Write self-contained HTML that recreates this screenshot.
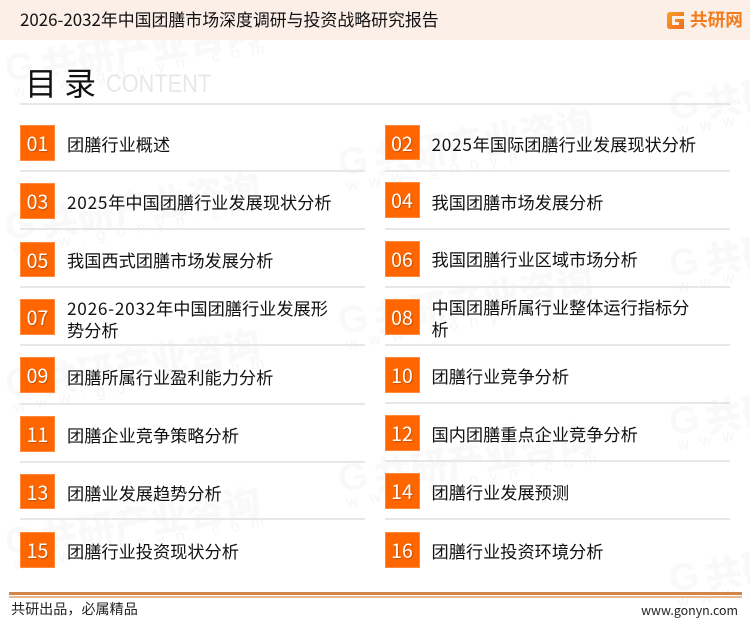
<!DOCTYPE html>
<html lang="zh">
<head>
<meta charset="utf-8">
<title>目录</title>
<style>
html,body{margin:0;padding:0;background:#fff;width:750px;height:622px;overflow:hidden}
#p{position:relative;width:750px;height:622px;overflow:hidden;font-family:"Noto Sans CJK SC","Liberation Sans",sans-serif;color:#222;background:#fff}
.hd{position:absolute;left:0;top:0;width:750px;height:40px;background:#fcefe8}
.ttl{position:absolute;left:20px;top:7px;font-size:16.9px;line-height:24px;color:#111;white-space:nowrap}
.lg{position:absolute;left:690px;top:9px;font-size:17.6px;line-height:22px;font-weight:700;color:#f27b1c;white-space:nowrap}
.wm{position:absolute;width:300px;height:54px;transform:rotate(-10deg);transform-origin:0 0;white-space:nowrap;color:#f9f9f9}
.wm b{position:absolute;left:38px;top:0;font-size:37px;line-height:40px;font-weight:900}
.wm i{position:absolute;left:2px;top:0;font:900 38px/40px "Liberation Sans",sans-serif}
.wm span{position:absolute;left:6px;top:34px;font:16px/20px "Liberation Sans",sans-serif;letter-spacing:11.5px;color:#f6f6f6}
.h1{position:absolute;left:25px;top:60px;font-size:32px;line-height:44px;color:#111;white-space:nowrap}
.en{position:absolute;left:106px;top:69px;font:25px/30px "Liberation Sans",sans-serif;color:#e8e8e8;transform:scaleX(.87);transform-origin:0 0}
.ln{position:absolute;height:2px;background:#e7e7e7}
.n{position:absolute;width:35px;height:36px;background:#ff6600;color:#fff;text-align:center;font-size:19.5px;line-height:35px;box-shadow:inset 0 0 0 1px #ff8a3c;text-shadow:1px 1px 1px rgba(120,50,0,.45)}
.t{position:absolute;font-size:17.2px;line-height:21.5px;color:#111;white-space:nowrap}
.t u{text-decoration:none;letter-spacing:.75px}
.f1{position:absolute;left:11px;top:599px;font-size:14.1px;line-height:20px;color:#222;white-space:nowrap}
.f2{position:absolute;right:12px;top:600px;font:12.4px/20px "Noto Sans CJK SC","Liberation Sans",sans-serif;color:#222;white-space:nowrap}
</style>
</head>
<body>
<div id="p">
<div class="wm" style="left:0;top:51px"><i>G</i><b>共研产业咨询</b><span>www.gonyn.com</span></div>
<div class="wm" style="left:0;top:209px"><i>G</i><b>共研产业咨询</b><span>www.gonyn.com</span></div>
<div class="wm" style="left:0;top:366px"><i>G</i><b>共研产业咨询</b><span>www.gonyn.com</span></div>
<div class="wm" style="left:0;top:524px"><i>G</i><b>共研产业咨询</b><span>www.gonyn.com</span></div>
<div class="wm" style="left:333px;top:145px"><i>G</i><b>共研产业咨询</b><span>www.gonyn.com</span></div>
<div class="wm" style="left:333px;top:303px"><i>G</i><b>共研产业咨询</b><span>www.gonyn.com</span></div>
<div class="wm" style="left:333px;top:461px"><i>G</i><b>共研产业咨询</b><span>www.gonyn.com</span></div>
<div class="wm" style="left:664px;top:89px"><i>G</i><b>共研产业咨询</b><span>www.gonyn.com</span></div>
<div class="wm" style="left:664px;top:246px"><i>G</i><b>共研产业咨询</b><span>www.gonyn.com</span></div>
<div class="wm" style="left:664px;top:404px"><i>G</i><b>共研产业咨询</b><span>www.gonyn.com</span></div>
<div class="wm" style="left:664px;top:561px"><i>G</i><b>共研产业咨询</b><span>www.gonyn.com</span></div>

<div class="hd"></div>
<div class="ttl">2026-2032年中国团膳市场深度调研与投资战略研究报告</div>
<svg style="position:absolute;left:667px;top:12px" width="18" height="17" viewBox="0 0 18 17"><defs><linearGradient id="g" x1="0" y1="0" x2="1" y2="1"><stop offset="0" stop-color="#f9a02a"/><stop offset="1" stop-color="#ef6a1a"/></linearGradient></defs><path d="M3 0H17V4H5V13H12V10H8V7H17V17H3Q0 17 0 14V3Q0 0 3 0Z" fill="url(#g)"/></svg>
<div class="lg">共研网</div>

<div class="h1">目 录</div>
<div class="en">CONTENT</div>
<div class="ln" style="left:20px;top:103px;height:1.5px;width:710px"></div>

<div class="n" style="left:20px;top:125px">01</div><div class="t" style="left:67px;top:133px">团膳行业概述</div>
<div class="n" style="left:384.5px;top:125px;height:35px">02</div><div class="t" style="left:431.5px;top:133px"><u>2025</u>年国际团膳行业发展现状分析</div>
<div class="ln" style="left:20px;top:170px;width:345px"></div><div class="ln" style="left:384.5px;top:169.5px;width:345.5px"></div>

<div class="n" style="left:20px;top:183px">03</div><div class="t" style="left:67px;top:191px"><u>2025</u>年中国团膳行业发展现状分析</div>
<div class="n" style="left:384.5px;top:182px">04</div><div class="t" style="left:431.5px;top:191px">我国团膳市场发展分析</div>
<div class="ln" style="left:20px;top:228px;width:345px"></div><div class="ln" style="left:384.5px;top:228px;width:345.5px"></div>

<div class="n" style="left:20px;top:242px;height:35px">05</div><div class="t" style="left:67px;top:249px">我国西式团膳市场发展分析</div>
<div class="n" style="left:384.5px;top:241px">06</div><div class="t" style="left:431.5px;top:248px">我国团膳行业区域市场分析</div>
<div class="ln" style="left:20px;top:286px;width:345px"></div><div class="ln" style="left:384.5px;top:286px;width:345.5px"></div>

<div class="n" style="left:20px;top:299px">07</div><div class="t" style="left:67px;top:297px"><u>2026-2032</u>年中国团膳行业发展形<br>势分析</div>
<div class="n" style="left:384.5px;top:299px">08</div><div class="t" style="left:431.5px;top:296px">中国团膳所属行业整体运行指标分<br>析</div>
<div class="ln" style="left:20px;top:344px;width:345px"></div><div class="ln" style="left:384.5px;top:344px;width:345.5px"></div>

<div class="n" style="left:20px;top:357px">09</div><div class="t" style="left:67px;top:366px">团膳所属行业盈利能力分析</div>
<div class="n" style="left:384.5px;top:357px">10</div><div class="t" style="left:431.5px;top:365px">团膳行业竞争分析</div>
<div class="ln" style="left:20px;top:403px;width:345px"></div><div class="ln" style="left:384.5px;top:402px;width:345.5px"></div>

<div class="n" style="left:20px;top:416px">11</div><div class="t" style="left:67px;top:424px">团膳企业竞争策略分析</div>
<div class="n" style="left:384.5px;top:415px">12</div><div class="t" style="left:431.5px;top:423px">国内团膳重点企业竞争分析</div>
<div class="ln" style="left:20px;top:461px;width:345px"></div><div class="ln" style="left:384.5px;top:460px;width:345.5px"></div>

<div class="n" style="left:20px;top:474px;height:35px">13</div><div class="t" style="left:67px;top:482px">团膳业发展趋势分析</div>
<div class="n" style="left:384.5px;top:473px">14</div><div class="t" style="left:431.5px;top:481px">团膳行业发展预测</div>
<div class="ln" style="left:20px;top:518px;width:345px"></div><div class="ln" style="left:384.5px;top:518px;width:345.5px"></div>

<div class="n" style="left:20px;top:532px">15</div><div class="t" style="left:67px;top:540px">团膳行业投资现状分析</div>
<div class="n" style="left:384.5px;top:532px">16</div><div class="t" style="left:431.5px;top:540px">团膳行业投资环境分析</div>

<div style="position:absolute;left:9px;top:592px;width:733px;height:3px;background:#d2874a"></div>
<div style="position:absolute;left:9px;top:596px;width:733px;height:1.5px;background:#e9b88e"></div>
<div class="f1">共研出品，必属精品</div>
<div class="f2">www.gonyn.com</div>
</div>
</body>
</html>
